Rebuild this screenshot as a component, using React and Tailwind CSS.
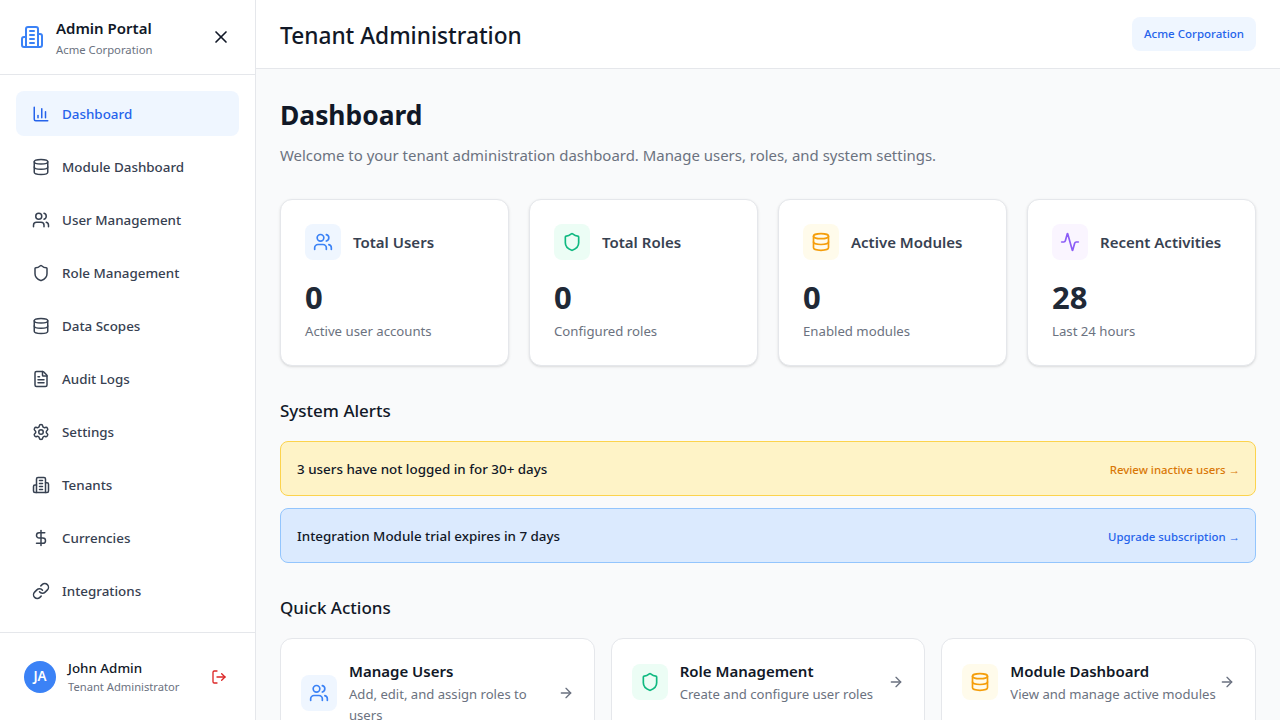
import { ArrowRight, Activity, ChartColumn, Database, DollarSign, FileText, Link, LogOut, Settings, Shield, Users, X } from 'lucide-react';

// older lucide building-2, the one in the package has changed shape
function Building({ size = 18, className = '' }) {
  return (
    <svg width={size} height={size} viewBox="0 0 24 24" fill="none" stroke="currentColor" strokeWidth="2" strokeLinecap="round" strokeLinejoin="round" className={className}>
      <path d="M6 22V4a2 2 0 0 1 2-2h8a2 2 0 0 1 2 2v18Z" />
      <path d="M6 12H4a2 2 0 0 0-2 2v6a2 2 0 0 0 2 2h2" />
      <path d="M18 9h2a2 2 0 0 1 2 2v9a2 2 0 0 1-2 2h-2" />
      <path d="M10 6h4" />
      <path d="M10 10h4" />
      <path d="M10 14h4" />
      <path d="M10 18h4" />
    </svg>
  );
}

const navItems = [
  { label: 'Dashboard', icon: ChartColumn, active: true },
  { label: 'Module Dashboard', icon: Database },
  { label: 'User Management', icon: Users },
  { label: 'Role Management', icon: Shield },
  { label: 'Data Scopes', icon: Database },
  { label: 'Audit Logs', icon: FileText },
  { label: 'Settings', icon: Settings },
  { label: 'Tenants', icon: Building },
  { label: 'Currencies', icon: DollarSign },
  { label: 'Integrations', icon: Link },
];

const stats = [
  { title: 'Total Users', value: '0', note: 'Active user accounts', icon: Users, tint: 'bg-[#eff6ff] text-[#3b82f6]' },
  { title: 'Total Roles', value: '0', note: 'Configured roles', icon: Shield, tint: 'bg-[#ecfdf5] text-[#10b981]' },
  { title: 'Active Modules', value: '0', note: 'Enabled modules', icon: Database, tint: 'bg-[#fffbeb] text-[#f59e0b]' },
  { title: 'Recent Activities', value: '28', note: 'Last 24 hours', icon: Activity, tint: 'bg-[#faf5ff] text-[#8b5cf6]' },
];

const actions = [
  { title: 'Manage Users', text: 'Add, edit, and assign roles to users', icon: Users, tint: 'bg-[#eff6ff] text-[#3b82f6]' },
  { title: 'Role Management', text: 'Create and configure user roles', icon: Shield, tint: 'bg-[#ecfdf5] text-[#10b981]' },
  { title: 'Module Dashboard', text: 'View and manage active modules', icon: Database, tint: 'bg-[#fffbeb] text-[#f59e0b]' },
];

function Sidebar() {
  return (
    <aside className="flex h-full w-[256px] shrink-0 flex-col border-r border-[#e5e7eb] bg-white">
      <div className="flex h-[75px] shrink-0 items-center justify-between border-b border-[#e5e7eb] pl-5 pr-6">
        <div className="flex items-center gap-3">
          <Building size={24} className="text-[#3b82f6]" />
          <div>
            <div className="text-[15px] font-semibold leading-6 text-[#111827]">Admin Portal</div>
            <div className="mt-px text-[11.3px] leading-[18px] text-[#6b7280]">Acme Corporation</div>
          </div>
        </div>
        <X size={20} className="text-[#111827]" />
      </div>

      <nav className="flex flex-1 flex-col gap-2 px-4 py-4">
        {navItems.map(({ label, icon: Icon, active }) => (
          <a
            key={label}
            className={`flex items-center gap-3 rounded-lg px-4 py-3 text-[13.4px] font-medium ${
              active ? 'bg-[#eff6ff] text-[#2563eb]' : 'text-[#374151]'
            }`}
          >
            <Icon size={18} />
            <span className="pt-0.5 leading-[19px]">{label}</span>
          </a>
        ))}
      </nav>

      <div className="flex h-[88px] shrink-0 items-center border-t border-[#e5e7eb] pl-6 pr-7">
        <div className="flex h-8 w-8 items-center justify-center rounded-full bg-[#3b82f6] text-[13.4px] font-semibold text-white">JA</div>
        <div className="ml-3 flex-1">
          <div className="pt-0.5 text-[13.4px] font-medium leading-[19px] text-[#111827]">John Admin</div>
          <div className="text-[11.2px] leading-[18px] text-[#6b7280]">Tenant Administrator</div>
        </div>
        <LogOut size={16} className="text-[#dc2626]" />
      </div>
    </aside>
  );
}

function StatCard({ title, value, note, icon: Icon, tint }) {
  return (
    <div className="rounded-xl border border-[#e5e7eb] bg-white p-6 pb-[23px] shadow-sm">
      <div className="flex items-center gap-3">
        <div className={`flex h-9 w-9 items-center justify-center rounded-lg ${tint}`}>
          <Icon size={20} />
        </div>
        <div className="text-[15px] font-semibold leading-6 text-[#374151]">{title}</div>
      </div>
      <div className="mt-4 text-[31px] font-bold leading-[42px] text-[#1f2937]">{value}</div>
      <div className="mt-[3px] text-[13.2px] leading-[21px] text-[#6b7280]">{note}</div>
    </div>
  );
}

function ActionCard({ title, text, icon: Icon, tint }) {
  return (
    <div className="rounded-xl border border-[#e5e7eb] bg-white p-5">
      <div className="flex items-center">
        <div className={`mr-3 flex h-9 w-9 shrink-0 items-center justify-center rounded-lg ${tint}`}>
          <Icon size={20} />
        </div>
        <div className="flex-1">
          <div className="text-[15px] font-semibold leading-6 text-[#111827]">{title}</div>
          <div className="mt-px text-[13.1px] leading-[21px] text-[#6b7280]">{text}</div>
        </div>
        <ArrowRight size={16} className="shrink-0 text-[#6b7280]" />
      </div>
    </div>
  );
}

function Alert({ text, link, box, linkColor }) {
  return (
    <div className={`flex items-center justify-between rounded-lg border py-4 pl-4 pr-[15px] ${box}`}>
      <span className="pt-0.5 text-[13.4px] font-medium leading-[19px] text-[#111827]">{text}</span>
      <span className={`pt-0.5 text-[11.4px] font-medium leading-4 ${linkColor}`}>
        {link} <span className="font-['Liberation_Sans',sans-serif]">→</span>
      </span>
    </div>
  );
}

export default function App() {
  return (
    <div className="flex h-screen overflow-hidden bg-[#f9fafb] font-['Noto_Sans',sans-serif] leading-normal">
      <Sidebar />
      <div className="flex min-w-0 flex-1 flex-col">
        <header className="flex h-[69px] shrink-0 items-center justify-between border-b border-[#e5e7eb] bg-white px-6">
          <h1 className="mt-[3px] text-[22.7px] font-medium leading-9 text-[#111827]">Tenant Administration</h1>
          <span className="rounded-lg bg-[#eff6ff] px-3 py-2 text-[11.5px] font-medium leading-[18px] text-[#2563eb]">Acme Corporation</span>
        </header>

        <main className="flex-1 overflow-hidden p-6">
          <h2 className="pt-0.5 text-[26.4px] font-bold leading-10 text-[#111827]">Dashboard</h2>
          <p className="mt-2 text-[14.95px] leading-6 text-[#6b7280]">Welcome to your tenant administration dashboard. Manage users, roles, and system settings.</p>

          <div className="mt-8 grid grid-cols-4 gap-5">
            {stats.map((s) => (
              <StatCard key={s.title} {...s} />
            ))}
          </div>

          <h3 className="mt-8 text-[17px] font-medium leading-[25px] text-[#111827]">System Alerts</h3>
          <div className="mt-[18px] flex flex-col gap-3">
            <Alert text="3 users have not logged in for 30+ days" link="Review inactive users" box="border-[#fcd34d] bg-[#fef3c7]" linkColor="text-[#d97706]" />
            <Alert text="Integration Module trial expires in 7 days" link="Upgrade subscription" box="border-[#93c5fd] bg-[#dbeafe]" linkColor="text-[#2563eb]" />
          </div>

          <h3 className="mt-8 text-[17px] font-medium leading-[25px] text-[#111827]">Quick Actions</h3>
          <div className="mt-[18px] grid grid-cols-3 gap-4">
            {actions.map((a) => (
              <ActionCard key={a.title} {...a} />
            ))}
          </div>
        </main>
      </div>
    </div>
  );
}
